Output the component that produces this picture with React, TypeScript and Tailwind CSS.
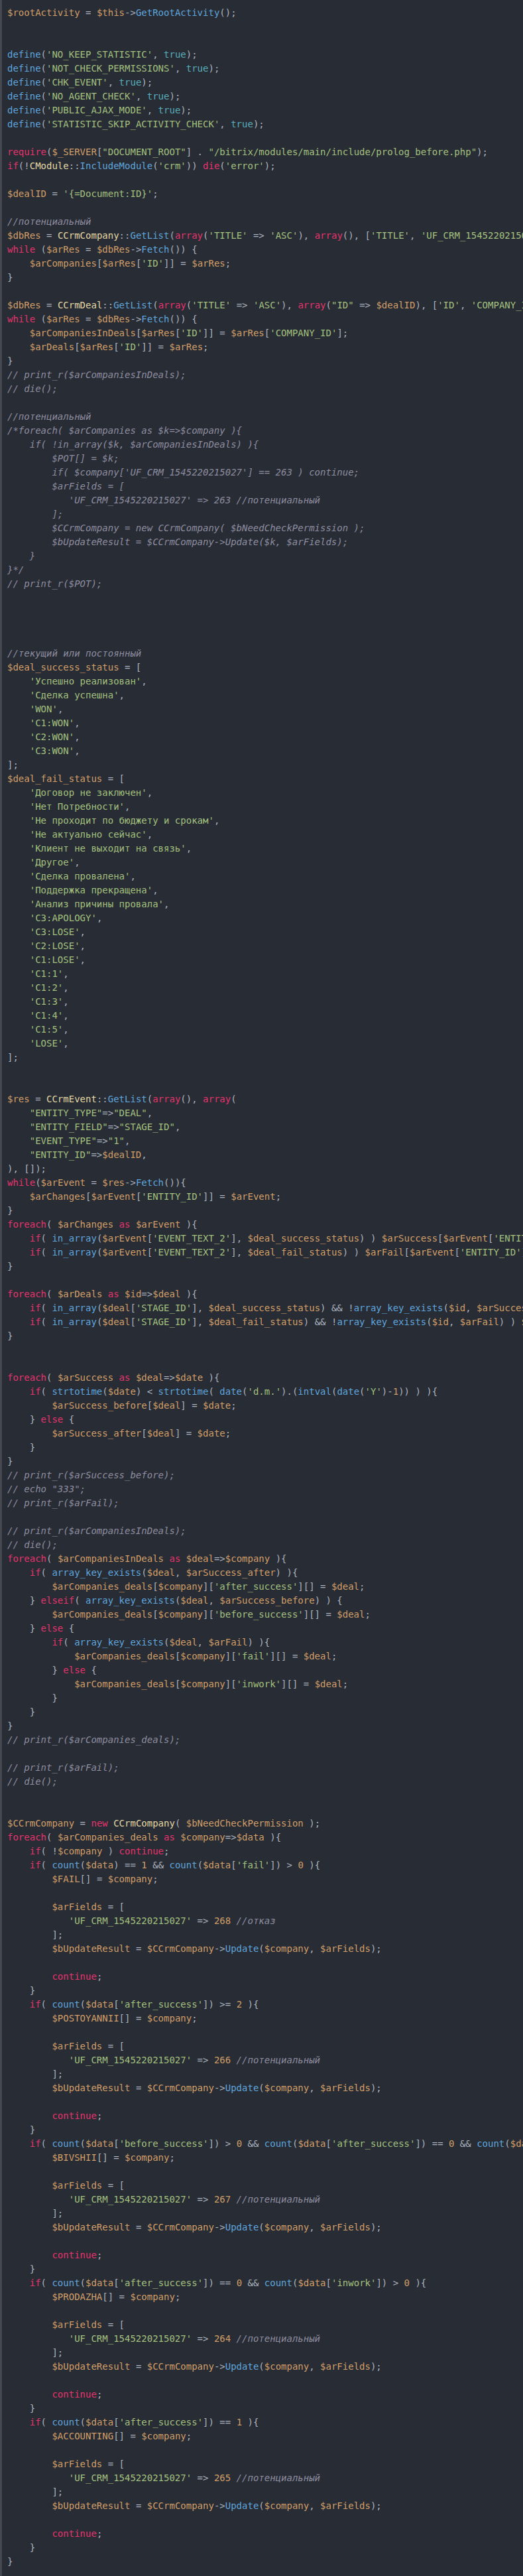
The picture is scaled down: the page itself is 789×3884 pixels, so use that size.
import React from "react";

const CODE = String.raw`$rootActivity = $this->GetRootActivity();


define('NO_KEEP_STATISTIC', true);
define('NOT_CHECK_PERMISSIONS', true);
define('CHK_EVENT', true);
define('NO_AGENT_CHECK', true);
define('PUBLIC_AJAX_MODE', true);
define('STATISTIC_SKIP_ACTIVITY_CHECK', true);

require($_SERVER["DOCUMENT_ROOT"] . "/bitrix/modules/main/include/prolog_before.php");
if(!CModule::IncludeModule('crm')) die('error');

$dealID = '{=Document:ID}';

//потенциальный
$dbRes = CCrmCompany::GetList(array('TITLE' => 'ASC'), array(), ['TITLE', 'UF_CRM_1545220215027']);
while ($arRes = $dbRes->Fetch()) {
    $arCompanies[$arRes['ID']] = $arRes;
}

$dbRes = CCrmDeal::GetList(array('TITLE' => 'ASC'), array("ID" => $dealID), ['ID', 'COMPANY_ID']);
while ($arRes = $dbRes->Fetch()) {
    $arCompaniesInDeals[$arRes['ID']] = $arRes['COMPANY_ID'];
    $arDeals[$arRes['ID']] = $arRes;
}
// print_r($arCompaniesInDeals);
// die();

//потенциальный
/*foreach( $arCompanies as $k=>$company ){
    if( !in_array($k, $arCompaniesInDeals) ){
        $POT[] = $k;
        if( $company['UF_CRM_1545220215027'] == 263 ) continue;
        $arFields = [
           'UF_CRM_1545220215027' => 263 //потенциальный
        ];
        $CCrmCompany = new CCrmCompany( $bNeedCheckPermission );
        $bUpdateResult = $CCrmCompany->Update($k, $arFields);
    }
}*/
// print_r($POT);




//текущий или постоянный
$deal_success_status = [
    'Успешно реализован',
    'Сделка успешна',
    'WON',
    'C1:WON',
    'C2:WON',
    'C3:WON',
];
$deal_fail_status = [
    'Договор не заключен',
    'Нет Потребности',
    'Не проходит по бюджету и срокам',
    'Не актуально сейчас',
    'Клиент не выходит на связь',
    'Другое',
    'Сделка провалена',
    'Поддержка прекращена',
    'Анализ причины провала',
    'C3:APOLOGY',
    'C3:LOSE',
    'C2:LOSE',
    'C1:LOSE',
    'C1:1',
    'C1:2',
    'C1:3',
    'C1:4',
    'C1:5',
    'LOSE',
];


$res = CCrmEvent::GetList(array(), array(
    "ENTITY_TYPE"=>"DEAL",
    "ENTITY_FIELD"=>"STAGE_ID",
    "EVENT_TYPE"=>"1",
    "ENTITY_ID"=>$dealID,
), []);
while($arEvent = $res->Fetch()){
    $arChanges[$arEvent['ENTITY_ID']] = $arEvent;
}
foreach( $arChanges as $arEvent ){
    if( in_array($arEvent['EVENT_TEXT_2'], $deal_success_status) ) $arSuccess[$arEvent['ENTITY_ID']] = $arEvent['DATE_CREATE'];
    if( in_array($arEvent['EVENT_TEXT_2'], $deal_fail_status) ) $arFail[$arEvent['ENTITY_ID']] = $arEvent['DATE_CREATE'];
}

foreach( $arDeals as $id=>$deal ){
    if( in_array($deal['STAGE_ID'], $deal_success_status) && !array_key_exists($id, $arSuccess) ) $arSuccess[$id] = $deal['CLOSEDATE'];
    if( in_array($deal['STAGE_ID'], $deal_fail_status) && !array_key_exists($id, $arFail) ) $arFail[$id] = $deal['CLOSEDATE'];
}


foreach( $arSuccess as $deal=>$date ){
    if( strtotime($date) < strtotime( date('d.m.').(intval(date('Y')-1)) ) ){
        $arSuccess_before[$deal] = $date;
    } else {
        $arSuccess_after[$deal] = $date;
    }
}
// print_r($arSuccess_before);
// echo "333";
// print_r($arFail);

// print_r($arCompaniesInDeals);
// die();
foreach( $arCompaniesInDeals as $deal=>$company ){
    if( array_key_exists($deal, $arSuccess_after) ){
        $arCompanies_deals[$company]['after_success'][] = $deal;
    } elseif( array_key_exists($deal, $arSuccess_before) ) {
        $arCompanies_deals[$company]['before_success'][] = $deal;
    } else {
        if( array_key_exists($deal, $arFail) ){
            $arCompanies_deals[$company]['fail'][] = $deal;
        } else {
            $arCompanies_deals[$company]['inwork'][] = $deal;
        }
    }
}
// print_r($arCompanies_deals);

// print_r($arFail);
// die();


$CCrmCompany = new CCrmCompany( $bNeedCheckPermission );
foreach( $arCompanies_deals as $company=>$data ){
    if( !$company ) continue;
    if( count($data) == 1 && count($data['fail']) > 0 ){
        $FAIL[] = $company;

        $arFields = [
           'UF_CRM_1545220215027' => 268 //отказ
        ];
        $bUpdateResult = $CCrmCompany->Update($company, $arFields);

        continue;
    }
    if( count($data['after_success']) >= 2 ){
        $POSTOYANNII[] = $company;

        $arFields = [
           'UF_CRM_1545220215027' => 266 //потенциальный
        ];
        $bUpdateResult = $CCrmCompany->Update($company, $arFields);

        continue;
    }
    if( count($data['before_success']) > 0 && count($data['after_success']) == 0 && count($data['inwork']) == 0 ){
        $BIVSHII[] = $company;

        $arFields = [
           'UF_CRM_1545220215027' => 267 //потенциальный
        ];
        $bUpdateResult = $CCrmCompany->Update($company, $arFields);

        continue;
    }
    if( count($data['after_success']) == 0 && count($data['inwork']) > 0 ){
        $PRODAZHA[] = $company;

        $arFields = [
           'UF_CRM_1545220215027' => 264 //потенциальный
        ];
        $bUpdateResult = $CCrmCompany->Update($company, $arFields);

        continue;
    }
    if( count($data['after_success']) == 1 ){
        $ACCOUNTING[] = $company;

        $arFields = [
           'UF_CRM_1545220215027' => 265 //потенциальный
        ];
        $bUpdateResult = $CCrmCompany->Update($company, $arFields);

        continue;
    }
}`;

type Kind = "p" | "cm" | "str" | "var" | "num" | "kw" | "fn" | "cls" | "bool";
type Tok = { t: string; k: Kind };

const CLS: Record<Kind, string> = {
  p: "text-[#abb2bf]",
  cm: "text-[#8e8ca0] italic",
  str: "text-[#a3c07f]",
  var: "text-[#d19e69]",
  num: "text-[#d19e69]",
  kw: "text-[#e5336d]",
  fn: "text-[#5fa5dd]",
  cls: "text-[#e4d8a6]",
  bool: "text-[#58adbb]",
};

const KEYWORDS = new Set([
  "if",
  "while",
  "foreach",
  "as",
  "new",
  "continue",
  "else",
  "elseif",
  "require",
  "die",
  "array",
]);
const CONSTS = new Set(["true", "false", "null"]);

function tokenize(line: string, state: { inBlock: boolean }): Tok[] {
  const out: Tok[] = [];
  const push = (t: string, k: Kind) => {
    const last = out[out.length - 1];
    if (last && last.k === k) last.t += t;
    else out.push({ t, k });
  };
  let i = 0;
  while (i < line.length) {
    if (state.inBlock) {
      const end = line.indexOf("*/", i);
      if (end === -1) {
        push(line.slice(i), "cm");
        i = line.length;
      } else {
        push(line.slice(i, end + 2), "cm");
        i = end + 2;
        state.inBlock = false;
      }
      continue;
    }
    const ch = line[i];
    if (line.startsWith("/*", i)) {
      state.inBlock = true;
      continue;
    }
    if (line.startsWith("//", i)) {
      push(line.slice(i), "cm");
      break;
    }
    if (ch === "'" || ch === '"') {
      let j = i + 1;
      while (j < line.length && line[j] !== ch) j++;
      push(line.slice(i, j + 1), "str");
      i = j + 1;
      continue;
    }
    if (ch === "$") {
      const m = /^\$[A-Za-z_][A-Za-z0-9_]*/.exec(line.slice(i));
      if (m) {
        push(m[0], "var");
        i += m[0].length;
        continue;
      }
    }
    if (/[0-9]/.test(ch)) {
      const m = /^[0-9]+/.exec(line.slice(i))!;
      push(m[0], "num");
      i += m[0].length;
      continue;
    }
    if (/[A-Za-z_]/.test(ch)) {
      const m = /^[A-Za-z_][A-Za-z0-9_]*/.exec(line.slice(i))!;
      const w = m[0];
      const rest = line.slice(i + w.length);
      const before = line.slice(0, i);
      let k: Kind = "p";
      if (KEYWORDS.has(w)) k = "kw";
      else if (CONSTS.has(w)) k = "bool";
      else if (/^C[A-Z]/.test(w)) k = "cls";
      else if (/^\s*\(/.test(rest) || /(->|::)$/.test(before)) k = "fn";
      push(w, k);
      i += w.length;
      continue;
    }
    push(ch, "p");
    i++;
  }
  return out;
}

export default function App() {
  const state = { inBlock: false };
  const lines = CODE.split("\n").map((l) => tokenize(l, state));
  return (
    <div className="min-h-screen w-full overflow-hidden bg-[#282c34] border-l-[3px] border-[#464950] pl-2 pt-[9px] pb-[11px]">
      <div className="[font-family:'DejaVu_Sans_Mono',monospace] text-[14px] leading-[21px] whitespace-pre text-[#abb2bf]">
        {lines.map((toks, idx) => (
          <div key={idx} className="h-[21px]">
            {toks.length === 0
              ? " "
              : toks.map((tk, j) => (
                  <span key={j} className={CLS[tk.k]}>
                    {tk.t}
                  </span>
                ))}
          </div>
        ))}
      </div>
    </div>
  );
}
